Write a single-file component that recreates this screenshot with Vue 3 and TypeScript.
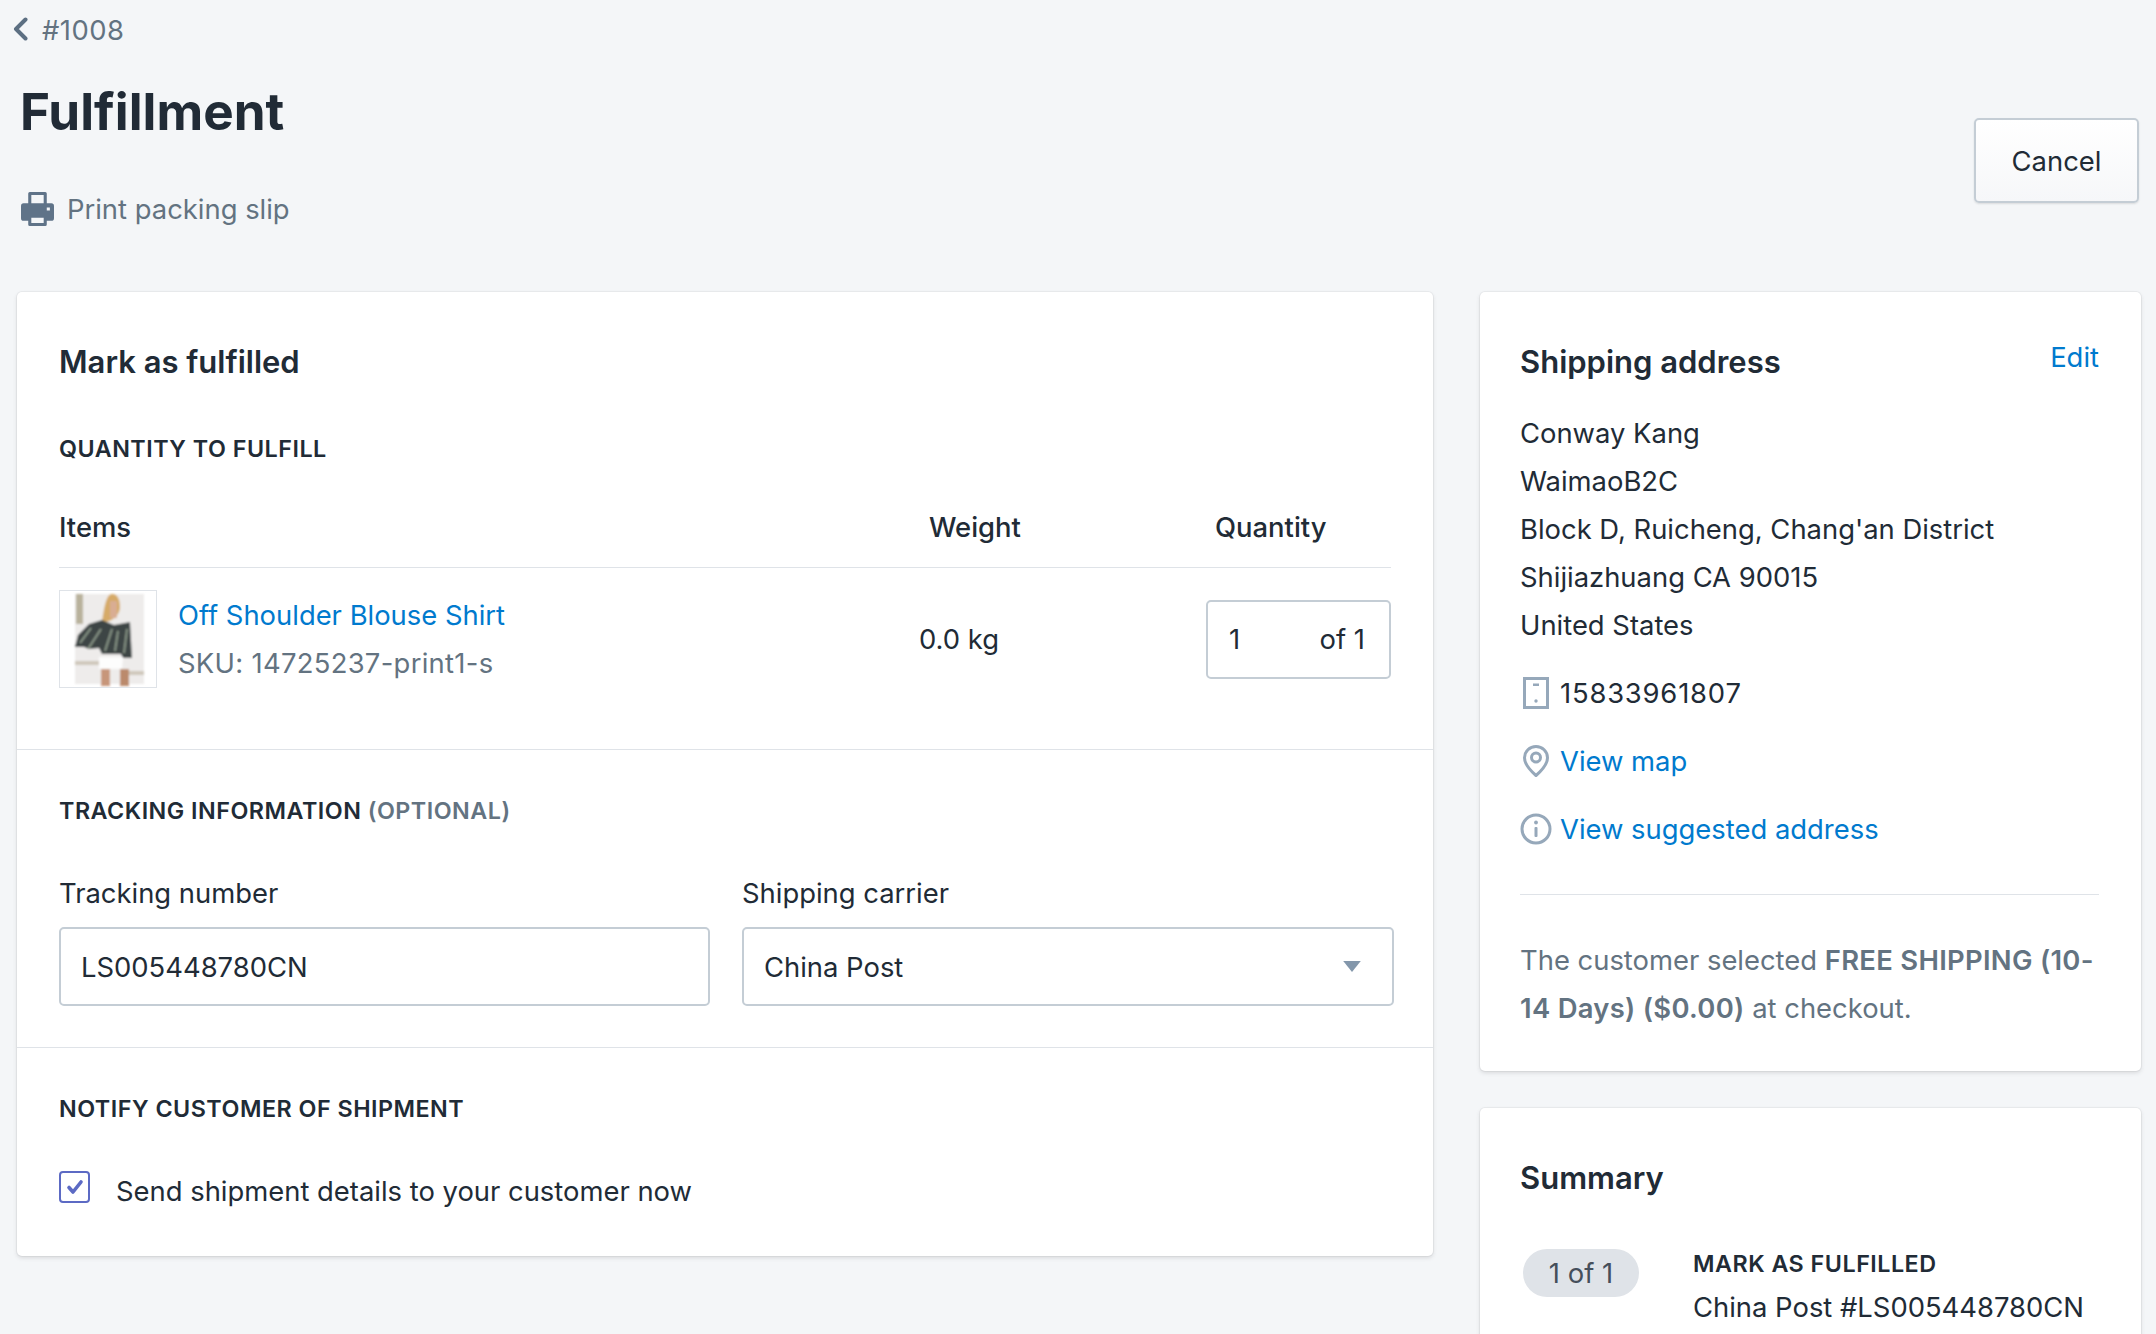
<script setup lang="ts">
const addressLines: string[] = [
  'Conway Kang',
  'WaimaoB2C',
  "Block D, Ruicheng, Chang'an District",
  'Shijiazhuang CA 90015',
  'United States',
]
</script>

<template>
  <div class="page">
    <header class="header">
      <div class="header-left">
        <div class="back">
          <svg class="chevron" viewBox="0 0 16 24" width="16" height="24"><path d="M12.500 2.500 3 12l9.500 9.500" fill="none" stroke="#5c6f82" stroke-width="4" stroke-linecap="round" stroke-linejoin="round" /></svg>
          <span class="order">#1008</span>
        </div>
        <h1 class="title">Fulfillment</h1>
        <div class="print">
          <svg viewBox="0 0 32 33" width="33" height="34">
            <path fill="#5f7388" fill-rule="evenodd" d="M7 1.500A1.500 1.500 0 0 1 8.500 0h15A1.500 1.500 0 0 1 25 1.500V11h4.500a2.500 2.500 0 0 1 2.500 2.500v12a2.500 2.500 0 0 1-2.500 2.500H25v3.500a1.500 1.500 0 0 1-1.500 1.500h-15A1.500 1.500 0 0 1 7 31.500V28H2.500A2.500 2.500 0 0 1 0 25.500v-12A2.500 2.500 0 0 1 2.500 11H7V1.500zM10 3v8h12V3H10zm0 22v5h12v-5H10zm15-10v3h3v-3h-3z" />
          </svg>
          <span>Print packing slip</span>
        </div>
      </div>
      <button class="cancel">Cancel</button>
    </header>

    <main class="columns">
      <section class="card">
        <div class="section first">
          <h2 class="card-title">Mark as fulfilled</h2>
          <h3 class="label q-label">QUANTITY TO FULFILL</h3>
          <div class="table-head">
            <div>Items</div>
            <div class="head-weight">Weight</div>
            <div class="head-qty">Quantity</div>
          </div>
          <div class="table-row">
            <div class="item">
              <div class="thumb">
                <svg viewBox="0 0 96 96" width="96" height="96">
                  <defs>
                    <filter id="soft" x="-10%" y="-10%" width="120%" height="120%"><feGaussianBlur stdDeviation="1" /></filter>
                  </defs>
                  <rect width="96" height="96" fill="#fff" />
                  <g filter="url(#soft)">
                    <rect x="15" y="3" width="69" height="90" fill="#eeeceb" />
                    <rect x="16" y="3" width="7" height="30" fill="#b9b29c" />
                    <rect x="15" y="70" width="24" height="4" fill="#cfc8bc" />
                    <rect x="62" y="80" width="22" height="4" fill="#cfc8bc" />
                    <path d="M42 31c2-13 4-28 10-28 6 0 8 6 8 13 0 7-6 15-18 15z" fill="#d6aa68" />
                    <rect x="50" y="10" width="7" height="17" fill="#d9ad93" />
                    <path d="M15 56 18 44 29 33l13-4 12 5 16-3 2 36-9 0 -2-4H42l-3-6-10 1-5-2z" fill="#3c4544" />
                    <path d="M20 52 31 37M28 58l13-20M45 60l7-22M55 60l3-20M64 62l3-24" stroke="#8d9a8b" stroke-width="1.800" fill="none" />
                    <path d="M39 66h24l-1 12H39z" fill="#fdfdfd" />
                    <rect x="41" y="78" width="9" height="17" fill="#c7967a" />
                    <rect x="60" y="78" width="9" height="17" fill="#bb8a6c" />
                  </g>
                </svg>
              </div>
              <div class="item-text">
                <a class="link">Off Shoulder Blouse Shirt</a>
                <div class="muted sku">SKU: 14725237-print1-s</div>
              </div>
            </div>
            <div class="weight">0.0 kg</div>
            <div class="qty">
              <span>1</span>
              <span>of 1</span>
            </div>
          </div>
        </div>

        <div class="section second">
          <h3 class="label">TRACKING INFORMATION <span class="optional">(OPTIONAL)</span></h3>
          <div class="fields">
            <div class="field">
              <div class="field-label">Tracking number</div>
              <div class="input">LS005448780CN</div>
            </div>
            <div class="field">
              <div class="field-label">Shipping carrier</div>
              <div class="input select">
                <span>China Post</span>
                <svg viewBox="0 0 16 10" width="18" height="11"><path d="M0 0h16L8 10z" fill="#8397ab" /></svg>
              </div>
            </div>
          </div>
        </div>

        <div class="section third">
          <h3 class="label">NOTIFY CUSTOMER OF SHIPMENT</h3>
          <div class="check-row">
            <span class="checkbox">
              <svg viewBox="0 0 20 20" width="20" height="20"><path d="m4 10.500 4 4.500 8-10" fill="none" stroke="#5c6ac4" stroke-width="3.600" stroke-linecap="round" stroke-linejoin="round" /></svg>
            </span>
            <span class="check-text">Send shipment details to your customer now</span>
          </div>
        </div>
      </section>

      <aside class="side">
        <section class="card side-card">
          <div class="side-head">
            <h2 class="card-title">Shipping address</h2>
            <a class="link edit">Edit</a>
          </div>
          <div class="address">
            <div v-for="line in addressLines" :key="line">{{ line }}</div>
          </div>
          <div class="contact">
            <span class="icon-slot">
              <svg viewBox="0 0 26 32" width="26" height="32"><rect x="1.500" y="1.500" width="23" height="29" fill="none" stroke="#96a8ba" stroke-width="3" /><rect x="10" y="6.500" width="6" height="2.500" fill="#96a8ba" /><circle cx="13" cy="24" r="1.700" fill="#96a8ba" /></svg>
            </span>
            <span class="phone">15833961807</span>
          </div>
          <div class="contact">
            <span class="icon-slot">
              <svg viewBox="0 0 26 32" width="26" height="32"><path d="M13 1.500C6.700 1.500 1.500 6.500 1.500 12.800c0 6.500 6.800 13.600 11.500 17.700 4.700-4.100 11.500-11.200 11.500-17.700C24.500 6.500 19.300 1.500 13 1.500z" fill="none" stroke="#96a8ba" stroke-width="3" stroke-linejoin="round" /><circle cx="13" cy="12.500" r="4.500" fill="none" stroke="#96a8ba" stroke-width="3" /></svg>
            </span>
            <a class="link">View map</a>
          </div>
          <div class="contact">
            <span class="icon-slot">
              <svg viewBox="0 0 32 32" width="32" height="32"><circle cx="16" cy="16" r="14" fill="none" stroke="#96a8ba" stroke-width="3" /><rect x="14.500" y="14" width="3" height="10" rx="1" fill="#96a8ba" /><circle cx="16" cy="9.500" r="1.900" fill="#96a8ba" /></svg>
            </span>
            <a class="link">View suggested address</a>
          </div>
          <div class="note">
            The customer selected <strong>FREE SHIPPING (10-14 Days) ($0.00)</strong> at checkout.
          </div>
        </section>

        <section class="card side-card summary">
          <h2 class="card-title">Summary</h2>
          <div class="summary-row">
            <span class="pill">1 of 1</span>
            <div>
              <div class="label summary-label">MARK AS FULFILLED</div>
              <div class="summary-detail">China Post #LS005448780CN</div>
            </div>
          </div>
        </section>
      </aside>
    </main>
  </div>
</template>

<style scoped>
.page {
  box-sizing: border-box;
  height: 1334px;
  overflow: hidden;
  padding: 0 15px 0 17px;
  background: #f4f6f8;
  color: #212b36;
  font-family: Inter, "Liberation Sans", sans-serif;
  font-size: 27.400px;
  line-height: 48px;
}
.header {
  display: flex;
  justify-content: space-between;
  height: 292px;
}
.header-left {
  padding-left: 3px;
}
.back {
  display: flex;
  align-items: center;
  gap: 13px;
  height: 60px;
  margin-left: -7px;
  color: #637381;
}
.order {
  letter-spacing: 0.5px;
}
.chevron {
  margin-top: -2px;
}
.title {
  margin: 21px 0 0;
  font-size: 51.200px;
  line-height: 60px;
  font-weight: 700;
}
.print {
  display: flex;
  align-items: center;
  gap: 13px;
  margin-top: 44px;
  margin-left: 1px;
  color: #637381;
}
.cancel {
  align-self: flex-start;
  box-sizing: border-box;
  width: 165px;
  height: 85px;
  margin-top: 118px;
  margin-right: 2px;
  border: 2px solid #c4cdd5;
  border-radius: 5px;
  background: linear-gradient(#fff, #f6f7f9);
  box-shadow: 0 1px 2px rgba(22, 29, 37, 0.12);
  color: #212b36;
  font: inherit;
}
.columns {
  display: grid;
  grid-template-columns: 1416px 661px;
  gap: 47px;
  align-items: start;
}
.card {
  box-sizing: border-box;
  background: #fff;
  border-radius: 5px;
  box-shadow: 0 0 0 1px rgba(63, 63, 68, 0.05), 0 2px 4px rgba(63, 63, 68, 0.15);
}
.section {
  padding: 0 42px;
}
.section + .section {
  border-top: 1px solid #dfe3e8;
}
.first {
  padding-top: 50px;
  padding-bottom: 61px;
}
.second {
  padding-top: 46px;
  padding-bottom: 41px;
}
.third {
  padding-top: 46px;
  padding-bottom: 53px;
}
.card-title {
  margin: 0;
  font-size: 31px;
  line-height: 40px;
  font-weight: 600;
}
.label {
  margin: 0;
  font-size: 23.300px;
  line-height: 30px;
  font-weight: 600;
  letter-spacing: 0.5px;
}
.q-label {
  margin-top: 52px;
}
.optional {
  color: #637381;
}
.table-head {
  display: grid;
  grid-template-columns: 860px 287px 185px;
  margin-top: 43px;
  padding-bottom: 20px;
  border-bottom: 1px solid #dfe3e8;
  line-height: 40px;
  font-weight: 500;
}
.head-weight {
  padding-left: 10px;
}
.head-qty {
  padding-left: 9px;
}
.table-row {
  display: grid;
  grid-template-columns: 860px 287px 185px;
  align-items: center;
  padding-top: 22px;
}
.item {
  display: flex;
  align-items: center;
  gap: 21px;
}
.thumb {
  width: 96px;
  height: 96px;
  border: 1px solid #dfe3e8;
}
.thumb svg {
  display: block;
}
.link {
  color: #007ace;
}
.muted {
  color: #637381;
}
.sku {
  letter-spacing: 0.3px;
}
.phone {
  letter-spacing: 0.8px;
}
.qty {
  box-sizing: border-box;
  display: flex;
  justify-content: space-between;
  align-items: center;
  height: 79px;
  padding: 0 24px 0 21px;
  border: 2px solid #c4cdd5;
  border-radius: 5px;
}
.fields {
  display: grid;
  grid-template-columns: 651px 652px;
  gap: 32px;
  margin-top: 47px;
}
.field-label {
  line-height: 40px;
  margin-bottom: 14px;
}
.input {
  box-sizing: border-box;
  display: flex;
  align-items: center;
  height: 79px;
  padding: 0 20px;
  border: 2px solid #c4cdd5;
  border-radius: 5px;
  background: #fff;
}
.select {
  justify-content: space-between;
  padding-right: 31px;
}
.check-row {
  display: flex;
  align-items: flex-start;
  gap: 26px;
  height: 32px;
  margin-top: 47px;
}
.check-text {
  margin-top: -4px;
}
.checkbox {
  box-sizing: border-box;
  display: flex;
  align-items: center;
  justify-content: center;
  width: 31px;
  height: 32px;
  border: 2px solid #5c6ac4;
  border-radius: 4px;
}
.side {
  display: flex;
  flex-direction: column;
  gap: 37px;
}
.side-card {
  padding: 50px 42px 39px 40px;
}
.side-head {
  display: flex;
  justify-content: space-between;
  align-items: flex-start;
}
.edit {
  margin-top: -5px;
  line-height: 40px;
}
.address {
  margin-top: 27px;
}
.contact {
  display: flex;
  align-items: center;
  gap: 8px;
  margin-top: 20px;
}
.icon-slot {
  display: flex;
  align-items: center;
  justify-content: center;
  width: 32px;
}
.note {
  margin-top: 41px;
  padding-top: 41px;
  border-top: 1px solid #dfe3e8;
  color: #637381;
}
.note strong {
  font-weight: 600;
  letter-spacing: 0.3px;
}
.summary {
  padding-bottom: 60px;
}
.summary-row {
  display: flex;
  align-items: flex-start;
  gap: 54px;
  margin-top: 51px;
  margin-left: 3px;
}
.pill {
  display: flex;
  align-items: center;
  justify-content: center;
  width: 116px;
  height: 48px;
  border-radius: 24px;
  background: #dfe3e8;
  color: #454f5b;
}
.summary-detail {
  margin-top: 4px;
}
</style>

<style>
html, body { margin: 0; background: #f4f6f8; overflow: hidden; }
</style>
